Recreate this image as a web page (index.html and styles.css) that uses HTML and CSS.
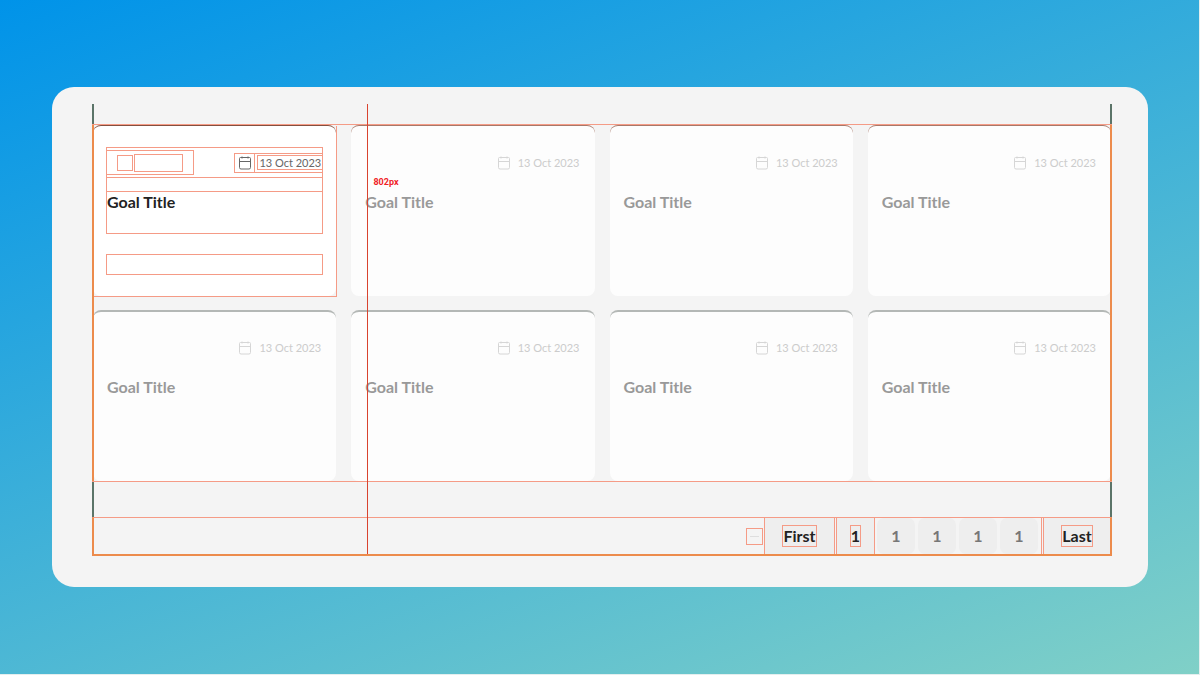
FILE: index.html
```
<!DOCTYPE html>
<html lang="en">
<head>
    <meta charset="UTF-8">
    <meta name="viewport" content="width=device-width, initial-scale=1.0">
    <title>Goals</title>
    <link rel="stylesheet" href="styles.css">
</head>
<body>

    <!-- Calendar icon shared by all cards -->
    <svg class="sprite" aria-hidden="true">
        <symbol id="calendar" viewBox="0 0 14 14">
            <path d="M2.5 1.5h9a1 1 0 0 1 1 1v9a1.500 1.500 0 0 1-1.500 1.500h-8a1.500 1.500 0 0 1-1.500-1.500v-9a1 1 0 0 1 1-1zM1.500 5.500h11M4 .5v2M10 .5v2"/>
        </symbol>
    </svg>

    <main class="stage">
        <div class="panel">
            <div class="board">
                <div class="strip strip-top"></div>

                <section class="goals">
                    <div class="grid" id="grid">
                        <article class="card active">
                            <div class="card-top">
                                <header class="card-head">
                                    <div class="tag"><span class="tag-icon"></span><span class="tag-label"></span></div>
                                    <div class="date"><svg class="icon"><use href="#calendar"/></svg><time datetime="2023-10-13">13 Oct 2023</time></div>
                                </header>
                                <h2 class="title">Goal Title</h2>
                            </div>
                            <div class="progress"></div>
                        </article>
                    </div>
                </section>

                <div class="strip"></div>

                <!-- Pagination -->
                <nav class="pager" aria-label="Pages">
                    <span class="minus"></span>
                    <button type="button" class="edge first"><span>First</span></button>
                    <div class="pages">
                        <button type="button" class="page current"><span>1</span></button>
                        <button type="button" class="page"><span>1</span></button>
                        <button type="button" class="page"><span>1</span></button>
                        <button type="button" class="page"><span>1</span></button>
                        <button type="button" class="page"><span>1</span></button>
                    </div>
                    <button type="button" class="edge last"><span>Last</span></button>
                </nav>

                <div class="ruler"><span class="ruler-label">802px</span></div>
            </div>
        </div>
    </main>

    <script>
        // Fill the rest of the grid with faded cards
        const grid = document.getElementById("grid");
        const first = grid.querySelector(".card");
        for (let i = 0; i < 7; i++) {
            const card = first.cloneNode(true);
            card.classList.remove("active");
            grid.appendChild(card);
        }
    </script>

</body>
</html>
```
FILE: styles.css
```
* {
    box-sizing: border-box;
}

:root {
    --guide: #f59b86;
    --frame: #ec8b4c;
    --edge: #5b7468;
}

body {
    margin: 0;
    background: #e4eeee;
    font-family: Lato, "Liberation Sans", sans-serif;
    color: #222;
}

.sprite {
    position: absolute;
    width: 0;
    height: 0;
}

.stage {
    display: flex;
    flex-direction: column;
    justify-content: center;
    min-height: calc(100vh - 1px);
    margin: 0 1px 1px 0;
    padding: 0 51px 0 52px;
    background: linear-gradient(160deg, #0093e9 0%, #80d0c7 100%);
}

.panel {
    padding: 17px 36px 31px 40px;
    border-radius: 22px;
    background: #f4f4f4;
}

.board {
    position: relative;
}

.strip {
    height: 35px;
    border: solid var(--edge);
    border-width: 0 2px;
}

.strip-top {
    height: 20px;
}

/* Cards */
.goals {
    position: relative;
    padding: 0 1px;
    border: solid var(--guide);
    border-width: 1px 0;
}

/* side lines run over the card edges */
.goals::after {
    content: "";
    position: absolute;
    inset: 0;
    border: solid var(--frame);
    border-width: 0 2px;
    pointer-events: none;
}

.grid {
    display: grid;
    grid-template-columns: repeat(4, 1fr);
    gap: 14px 15px;
}

.card {
    position: relative;
    height: 171px;
    padding: 20px 13px 0;
    border-top: 2px solid #b4b8b6;
    border-radius: 8px;
    background: #fdfdfd;
}

.card:nth-child(-n+4) {
    border-top: 1px solid #a87869;
    padding-top: 21px;
}

.card.active {
    border-top-color: #84503f;
    background: #fff;
}

.card.active::after {
    content: "";
    position: absolute;
    inset: 0 -1px -1px 0;
    border: solid var(--guide);
    border-width: 0 1px 1px 0;
}

.card-top {
    margin-bottom: 20px;
    border: 1px solid transparent;
}

.card-head {
    display: flex;
    align-items: center;
    justify-content: space-between;
    height: 30px;
    border-bottom: 1px solid transparent;
}

.tag {
    display: flex;
    align-items: center;
    gap: 1px;
    width: 87px;
    height: 25px;
    padding-left: 10px;
    border: 1px solid transparent;
    border-left: 0;
}

.tag-icon {
    width: 16px;
    height: 16px;
    border: 1px solid transparent;
}

.tag-label {
    width: 49px;
    height: 18px;
    border: 1px solid transparent;
}

.date {
    display: flex;
    align-items: center;
    gap: 2px;
    height: 20px;
    border: 1px solid transparent;
    border-right: 0;
    color: #ccc;
    font-size: 11px;
    line-height: 13px;
}

.date time {
    padding: 0 1px;
    border: 1px solid transparent;
    border-right: 0;
}

.icon {
    box-sizing: content-box;
    width: 14px;
    height: 14px;
    padding: 2px 2px 2px 3px;
    border-right: 1px solid transparent;
    fill: none;
    stroke: #d6d6d6;
}

.title {
    height: 42px;
    margin: 13px 0 0;
    border-top: 1px solid transparent;
    color: #999;
    font-size: 16px;
    line-height: 20px;
}

.progress {
    height: 21px;
    border: 1px solid transparent;
}

.active .card-top,
.active .card-head,
.active .tag,
.active .tag-icon,
.active .tag-label,
.active .date,
.active .date time,
.active .icon,
.active .title,
.active .progress {
    border-color: var(--guide);
}

.active .date {
    color: #666;
}

.active .icon {
    stroke: #666;
}

.active .title {
    color: #222;
}

/* Pagination */
.pager {
    display: flex;
    align-items: center;
    justify-content: flex-end;
    gap: 1px;
    height: 39px;
    border: 2px solid var(--frame);
    border-top: 1px solid var(--guide);
}

.minus {
    width: 17px;
    height: 17px;
    border: 1px solid var(--guide);
}

.minus::before {
    content: "";
    display: block;
    width: 9px;
    margin: 7px auto 0;
    border-top: 1px solid #dedede;
}

.pager button {
    height: 36px;
    padding: 0;
    border: 0;
    background: #eee;
    color: #222;
    font: bold 16px/20px Lato, "Liberation Sans", sans-serif;
    cursor: pointer;
}

.pager span {
    display: inline-block;
}

.edge span,
.current span {
    border: 1px solid var(--guide);
}

.pager .first {
    width: 71px;
    border: solid var(--guide);
    border-width: 0 1px;
}

.pager .last {
    width: 67px;
    border-left: 1px solid var(--guide);
}

.pages {
    display: flex;
    gap: 3px;
    padding-right: 3px;
    border-right: 1px solid var(--guide);
}

.pager .page {
    width: 38px;
    border-radius: 7px;
    color: #777;
}

.pager .current {
    width: 39px;
    margin-right: -1px;
    border: solid var(--guide);
    border-width: 0 1px;
    border-radius: 0;
    color: #222;
}

/* Vertical measure line */
.ruler {
    position: absolute;
    top: 0;
    bottom: 2px;
    left: 27%;
    width: 1px;
    background: #d9432f;
}

.ruler-label {
    position: absolute;
    top: 73px;
    left: 6px;
    color: #f01e28;
    font: bold 9px/11px Roboto, sans-serif;
}
```
